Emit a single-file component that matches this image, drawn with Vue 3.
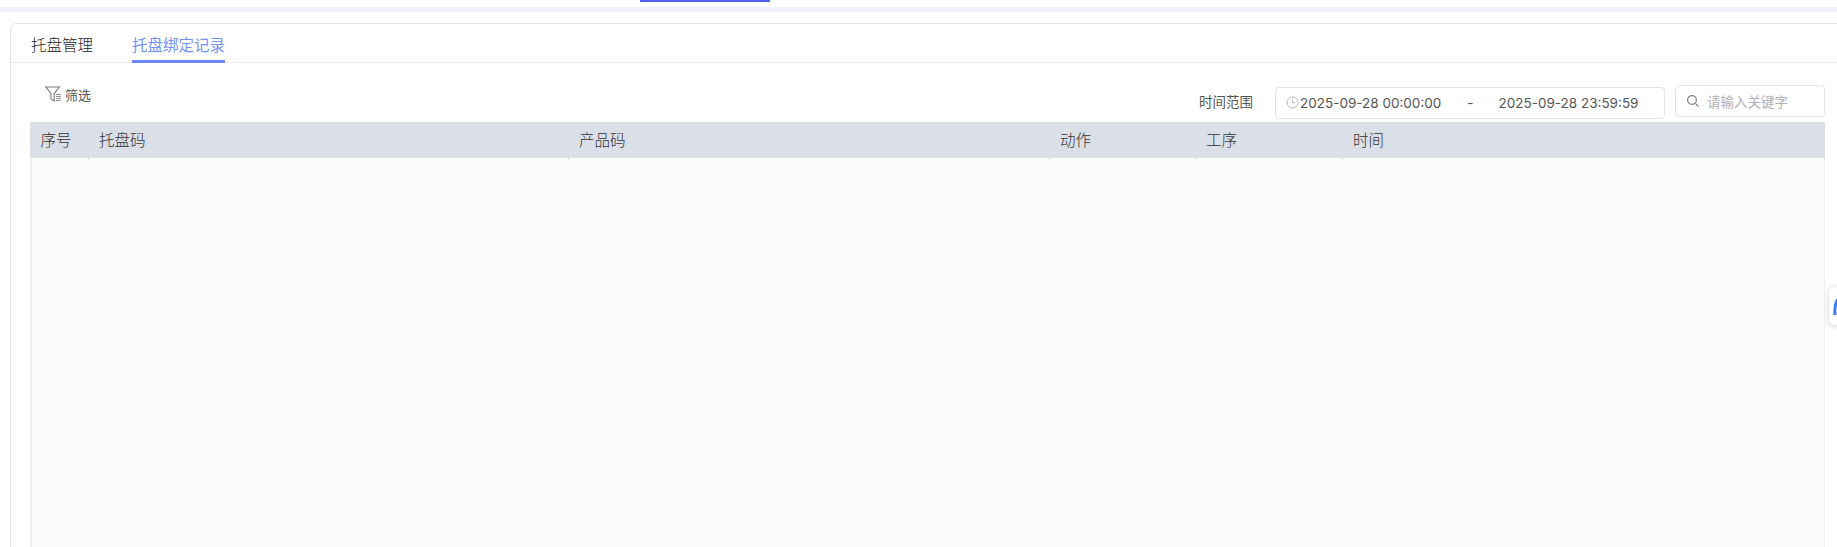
<template>
  <div class="page">
    <!-- 顶部导航残留 -->
    <div class="top-strip"><span class="top-active"></span></div>
    <div class="band"></div>

    <div class="card">
      <div class="tabs">
        <div v-for="(t, i) in tabs" :key="t" class="tab" :class="{ active: i === 1 }">{{ t }}</div>
      </div>

      <div class="toolbar">
        <div class="filter">
          <svg width="17" height="16" viewBox="0 0 17 16" fill="none" stroke="#75787e" stroke-width="1.1">
            <path d="M0.8 1h13.6L9.2 7.4V15L6 13V7.4z" />
            <path d="M11 8.5h5M11 10.5h5M11 12.5h5M11 14.5h5" stroke="#8f9297" />
          </svg>
          <span>筛选</span>
        </div>
        <div class="query">
          <span class="range-label">时间范围</span>
          <div class="range">
            <svg width="13" height="13" viewBox="0 0 13 13" fill="none" stroke="#b4b7bd" stroke-width="1">
              <circle cx="6.5" cy="6.5" r="5.5" />
              <path d="M6.5 3.2v3.5h2.8" />
            </svg>
            <span class="date">2025-09-28 00:00:00</span>
            <span class="dash">-</span>
            <span class="date">2025-09-28 23:59:59</span>
          </div>
          <div class="search">
            <svg width="14" height="14" viewBox="0 0 14 14" fill="none" stroke="#7d8087" stroke-width="1.2">
              <circle cx="6" cy="6" r="4.4" />
              <path d="M9.3 9.3l3 3" />
            </svg>
            <span>请输入关键字</span>
          </div>
        </div>
      </div>

      <div class="table">
        <div class="thead">
          <div v-for="c in columns" :key="c" class="th">{{ c }}</div>
        </div>
        <div class="tbody"></div>
      </div>
    </div>

    <!-- 右侧悬浮按钮 -->
    <div class="float-tab">
      <svg width="8" height="20" viewBox="0 0 8 20" fill="none" stroke="#3b7bf6" stroke-width="3">
        <path d="M6.5 1.5C2.5 5 1.5 12 2 19" />
      </svg>
    </div>
  </div>
</template>

<script setup>
const tabs = ["托盘管理", "托盘绑定记录"]
const columns = ["序号", "托盘码", "产品码", "动作", "工序", "时间"]
</script>

<style>
html, body {
  margin: 0;
  background: #fff;
}
</style>

<style scoped>
.page {
  position: relative;
  height: 547px;
  overflow: hidden;
  background: #fff;
  font-family: Inter, "Noto Sans CJK SC", sans-serif;
}

.top-strip {
  height: 7px;
}

.top-active {
  display: block;
  width: 130px;
  height: 2px;
  margin-left: 640px;
  background: #4f66f5;
}

.band {
  height: 5px;
  background: #f0f2f8;
}

.card {
  width: 1840px;
  height: 600px;
  margin: 11px 0 0 10px;
  border: 1.5px solid #e6e6e6;
  border-radius: 6px;
  background: #fff;
  box-sizing: border-box;
}

/* 标签页 */
.tabs {
  display: flex;
  gap: 39px;
  height: 37.5px;
  padding-left: 20px;
  border-bottom: 1px solid #e9ebf0;
}

.tab {
  height: 38.5px;
  line-height: 43px;
  font-size: 15.5px;
  font-weight: 300;
  color: #222;
  box-sizing: border-box;
}

.tab.active {
  font-weight: 400;
  color: #7592f8;
  border-bottom: 3px solid #6d8bf8;
}

/* 工具栏 */
.toolbar {
  display: flex;
  justify-content: space-between;
  align-items: flex-start;
  width: 1794px;
  height: 59px;
  margin-left: 20px;
  padding: 24px 0 0 14px;
  box-sizing: border-box;
}

.filter {
  display: flex;
  align-items: center;
  gap: 3px;
  margin-top: -2px;
  font-size: 13px;
  color: #555;
}

.query {
  display: flex;
  align-items: flex-start;
}

.range-label {
  margin-right: 22px;
  line-height: 30px;
  font-size: 13.5px;
  color: #555;
}

.range {
  display: flex;
  align-items: center;
  width: 390px;
  height: 32px;
  padding-left: 10px;
  border: 1px solid #e4e5ea;
  border-radius: 4px;
  font-size: 13.5px;
  color: #555;
  box-sizing: border-box;
}

.date {
  margin-left: 1px;
}

.dash {
  margin: 0 24px 0 26px;
}

.search {
  display: flex;
  align-items: center;
  gap: 7px;
  width: 150px;
  height: 32px;
  margin: -2px 0 0 10px;
  padding-left: 10px;
  border: 1px solid #e4e5ea;
  border-radius: 4px;
  font-size: 13.5px;
  color: #b0b2b8;
  box-sizing: border-box;
}

/* 表格 */
.table {
  width: 1795.5px;
  margin-left: 18.5px;
}

.thead {
  display: grid;
  grid-template-columns: 59.5px 480px 481px 146px 147px 1fr;
  height: 36px;
  background: #dbdfe8;
}

.th {
  padding-left: 10px;
  line-height: 38px;
  font-size: 15.5px;
  font-weight: 300;
  color: #333;
  border-right: 1px solid #dadee7;
}

.th:first-child {
  padding-left: 11px;
}

.tbody {
  height: 400px;
  background: #fbfbfb;
  border-left: 2px solid #f0f0f0;
  border-right: 1px solid #f0f0f0;
}

/* 悬浮按钮 */
.float-tab {
  position: absolute;
  top: 287px;
  left: 1829px;
  width: 20px;
  height: 38px;
  padding: 9px 0 0 4px;
  border-radius: 6px 0 0 6px;
  background: #fff;
  box-shadow: 0 1px 6px rgba(60, 70, 110, 0.25);
  box-sizing: border-box;
}
</style>
